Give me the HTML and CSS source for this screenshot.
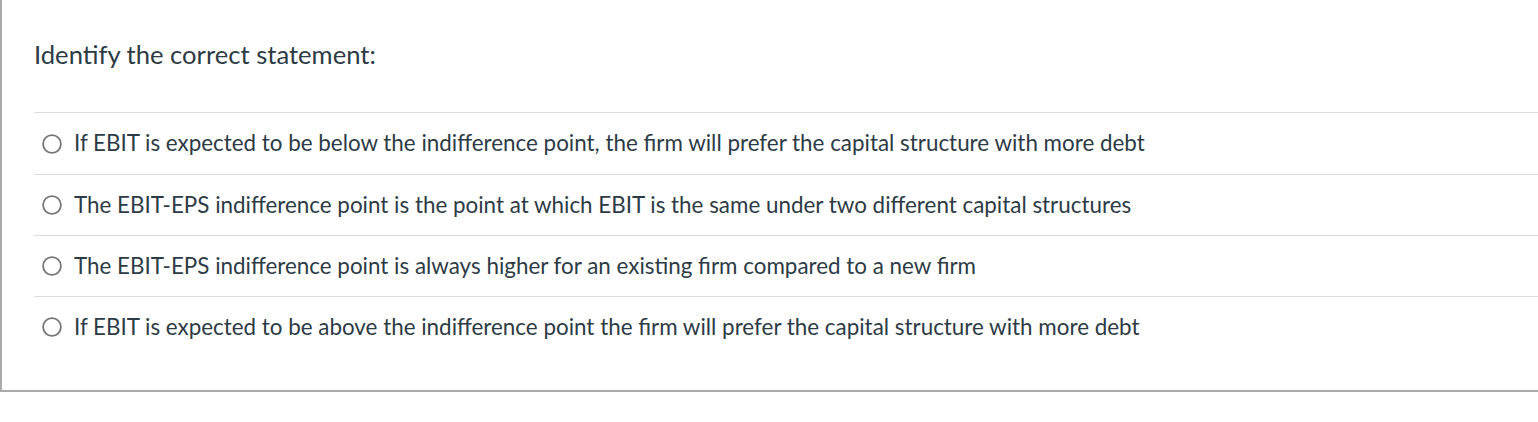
FILE: index.html
```html
<!DOCTYPE html>
<html>
<head>
<meta charset="utf-8">
<link rel="stylesheet" href="styles.css">
</head>
<body>
<div class="question">
  <div class="question-text">Identify the correct statement:</div>
  <div class="answers">
    <label class="answer"><span class="radio"><svg width="20" height="20" viewBox="0 0 20 20"><circle cx="10" cy="10" r="8.9" fill="#fff" stroke="#777777" stroke-width="1.8"/></svg></span><span class="answer-text">If EBIT is expected to be below the indifference point, the firm will prefer the capital structure with more debt</span></label>
    <label class="answer"><span class="radio"><svg width="20" height="20" viewBox="0 0 20 20"><circle cx="10" cy="10" r="8.9" fill="#fff" stroke="#777777" stroke-width="1.8"/></svg></span><span class="answer-text">The EBIT-EPS indifference point is the point at which EBIT is the same under two different capital structures</span></label>
    <label class="answer"><span class="radio"><svg width="20" height="20" viewBox="0 0 20 20"><circle cx="10" cy="10" r="8.9" fill="#fff" stroke="#777777" stroke-width="1.8"/></svg></span><span class="answer-text">The EBIT-EPS indifference point is always higher for an existing firm compared to a new firm</span></label>
    <label class="answer"><span class="radio"><svg width="20" height="20" viewBox="0 0 20 20"><circle cx="10" cy="10" r="8.9" fill="#fff" stroke="#777777" stroke-width="1.8"/></svg></span><span class="answer-text">If EBIT is expected to be above the indifference point the firm will prefer the capital structure with more debt</span></label>
  </div>
</div>
</body>
</html>
```
FILE: styles.css
```css
html, body {
  margin: 0;
  padding: 0;
  background: #fff;
}
body {
  font-family: Lato, "Liberation Sans", sans-serif;
  color: #2d3b45;
}
.question {
  border-left: 2px solid #aaaaaa;
  border-bottom: 2px solid #aaaaaa;
  padding: 35px 0 33px 32px;
}
.question-text {
  font-size: 25.6px;
  line-height: 38.4px;
  margin-bottom: 39px;
}
.answers {
  display: flex;
  flex-direction: column;
}
.answer {
  display: flex;
  align-items: center;
  height: 61px;
  border-top: 1px solid #dcdcdc;
  box-sizing: border-box;
  font-size: 22.4px;
}
.answer:first-child {
  height: 62px;
}
.radio {
  display: flex;
  width: 20px;
  height: 20px;
  margin-left: 8px;
  margin-right: 12px;
}
.answer-text {
  line-height: 30px;
  margin-top: -1px;
}
```
